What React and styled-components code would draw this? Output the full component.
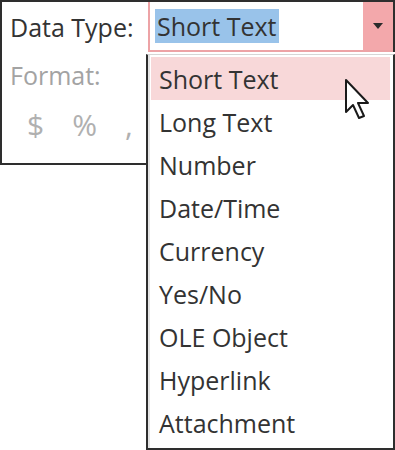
import React from 'react';
import styled, {createGlobalStyle} from 'styled-components';

const GlobalStyle = createGlobalStyle`
  html, body {
    margin: 0;
    padding: 0;
    background: #ffffff;
  }
  body {
    font-family: 'Open Sans', 'Noto Sans', sans-serif;
    color: #333333;
  }
`;

const Screen = styled.div`
  position: relative;
  width: 395px;
  height: 450px;
  display: flex;
  align-items: flex-start;
  overflow: hidden;
  background: #ffffff;
`;

// left "field properties" panel
const Panel = styled.div`
  flex: none;
  width: 148px;
  height: 165px;
  box-sizing: border-box;
  border-top: 2px solid #2e2e2e;
  border-left: 2px solid #2e2e2e;
  border-bottom: 2px solid #2e2e2e;
  display: flex;
  flex-direction: column;
  padding-left: 8px;
`;

const Label = styled.div`
  font-size: 25px;
  line-height: 30px;
  color: ${p => (p.muted ? '#a3a3a3' : '#333333')};
  margin-top: ${p => p.top}px;
  white-space: nowrap;
`;

const Symbols = styled.div`
  display: flex;
  gap: 28px;
  margin-top: 14px;
  padding-left: 17px;
  font-size: 30px;
  color: #b0b0b0;
`;

const Right = styled.div`
  flex: 1;
  display: flex;
  flex-direction: column;
  min-width: 0;
`;

const Combo = styled.div`
  height: 52px;
  display: flex;
  border-top: 2px solid #2e2e2e;
  border-right: 2px solid #2e2e2e;
  box-sizing: border-box;
`;

const ComboField = styled.div`
  flex: 1;
  display: flex;
  align-items: center;
  padding-left: 5px;
  border-left: 2px solid #eda3a6;
  border-bottom: 2px solid #eda3a6;
  background: #ffffff;
`;

const Selected = styled.span`
  background: #99c3ea;
  font-size: 25px;
  line-height: 34px;
  padding: 0 2px;
  color: #333333;
`;

const ArrowButton = styled.div`
  width: 30px;
  background: #f3a8ab;
  border-bottom: 2px solid #eda3a6;
  display: flex;
  align-items: center;
  justify-content: center;
`;

const List = styled.ul`
  list-style: none;
  margin: 2px 0 0 -2px;
  padding: 2px 3px 0 3px;
  height: 396px;
  border: 2px solid #2e2e2e;
  border-top: 1px solid #d6d6d6;
  box-shadow: inset 2px 0 0 #e4e4e4;
  box-sizing: border-box;
  background: #ffffff;
`;

const Item = styled.li`
  height: 43px;
  display: flex;
  align-items: center;
  padding-left: 8px;
  font-size: 25px;
  color: #333333;
  background: ${p => (p.active ? '#f8d8d9' : 'transparent')};
  white-space: nowrap;
`;

const Pointer = styled.svg`
  position: absolute;
  left: 344px;
  top: 78px;
`;

const types = [
  'Short Text',
  'Long Text',
  'Number',
  'Date/Time',
  'Currency',
  'Yes/No',
  'OLE Object',
  'Hyperlink',
  'Attachment',
];

const App = () => {
  return (
    <>
      <GlobalStyle />
      <Screen>
        <Panel>
          <Label top={10}>Data Type:</Label>
          <Label muted top={18}>Format:</Label>
          <Symbols>
            <span>$</span>
            <span>%</span>
            <span>,</span>
          </Symbols>
        </Panel>
        <Right>
          <Combo>
            <ComboField>
              <Selected>Short Text</Selected>
            </ComboField>
            <ArrowButton>
              <svg width="10" height="6" viewBox="0 0 10 6">
                <path d="M0 0h10L5 6z" fill="#2b2b2b" />
              </svg>
            </ArrowButton>
          </Combo>
          <List>
            {types.map((t, i) => (
              <Item key={t} active={i === 0}>{t}</Item>
            ))}
          </List>
        </Right>
        <Pointer width="28" height="42" viewBox="0 0 28 42">
          <path
            d="M2 2 L2 34 L9 27 L15 40 L20 38 L14 25 L24 25 Z"
            fill="#ffffff"
            stroke="#1a1a1a"
            strokeWidth="2"
            strokeLinejoin="round"
          />
        </Pointer>
      </Screen>
    </>
  );
};

export default App;
